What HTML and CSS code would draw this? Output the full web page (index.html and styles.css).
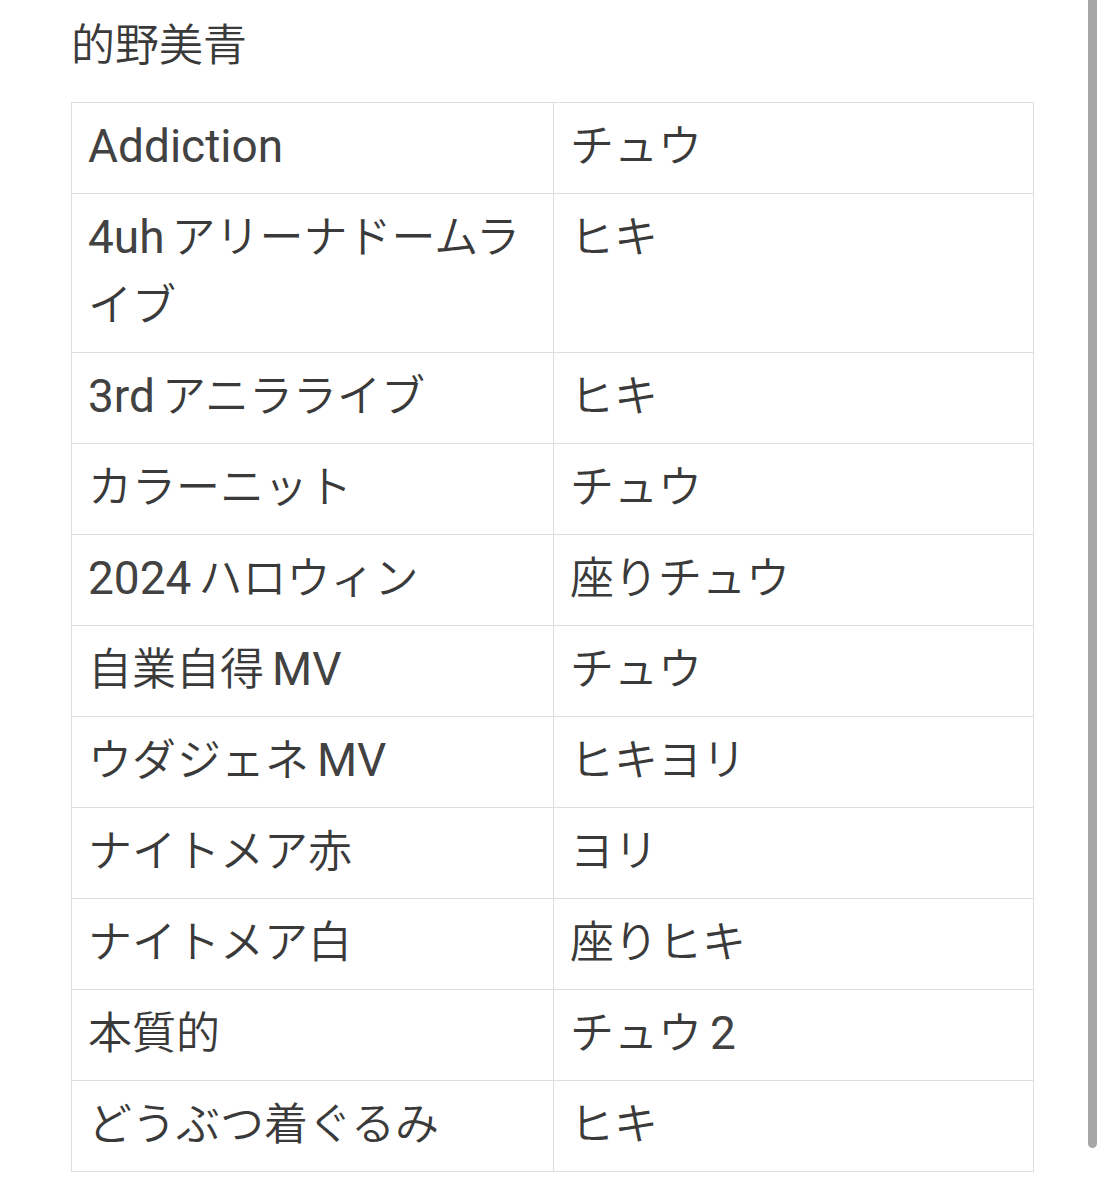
FILE: index.html
```html
<!DOCTYPE html>
<html lang="ja">
<head>
<meta charset="utf-8">
<link rel="stylesheet" href="styles.css">
</head>
<body>
<div class="page">
  <h2 class="title">的野美青</h2>
  <table class="list">
    <colgroup><col class="c1"><col class="c2"></colgroup>
    <tbody>
      <tr><td><span class="lat">Addiction</span></td><td>チュウ</td></tr>
      <tr><td><span class="lat pre">4uh</span>アリーナドームライブ</td><td>ヒキ</td></tr>
      <tr><td><span class="lat pre">3rd</span>アニラライブ</td><td>ヒキ</td></tr>
      <tr><td>カラーニット</td><td>チュウ</td></tr>
      <tr><td><span class="lat pre">2024</span>ハロウィン</td><td>座りチュウ</td></tr>
      <tr><td>自業自得<span class="lat post">MV</span></td><td>チュウ</td></tr>
      <tr><td>ウダジェネ<span class="lat post">MV</span></td><td>ヒキヨリ</td></tr>
      <tr><td>ナイトメア赤</td><td>ヨリ</td></tr>
      <tr><td>ナイトメア白</td><td>座りヒキ</td></tr>
      <tr><td>本質的</td><td>チュウ<span class="lat post">2</span></td></tr>
      <tr><td>どうぶつ着ぐるみ</td><td>ヒキ</td></tr>
    </tbody>
  </table>
  <div class="scrollbar"></div>
</div>
</body>
</html>
```
FILE: styles.css
```css
html, body {
  margin: 0;
  padding: 0;
  background: #ffffff;
}
.page {
  position: relative;
  width: 1105px;
  height: 1200px;
  overflow: hidden;
  padding: 8px 0 0 71px;
  box-sizing: border-box;
  font-family: "Noto Sans CJK JP", "Noto Sans", sans-serif;
  font-weight: 350;
  color: #3a3a3a;
}
.title {
  margin: 0 0 26px 0;
  font-size: 44px;
  line-height: 68px;
  font-weight: 350;
}
.list {
  border-collapse: collapse;
  width: 962px;
  table-layout: fixed;
}
.c1 { width: 482px; }
.c2 { width: 480px; }
.list td {
  border: 1px solid #dedede;
  padding: 6px 16px 16px 16px;
  font-size: 44px;
  line-height: 68px;
  vertical-align: top;
  word-break: break-all;
}
.lat {
  font-family: Roboto, "Liberation Sans", sans-serif;
  font-weight: 400;
  font-size: 46px;
  line-height: 1;
  color: #424242;
}
.lat.pre { margin-right: 7px; }
.lat.post { margin-left: 8px; }
.scrollbar {
  position: absolute;
  left: 1088px;
  top: -10px;
  width: 9px;
  height: 1158px;
  border-radius: 5px;
  background: #a6a6a6;
}
```
